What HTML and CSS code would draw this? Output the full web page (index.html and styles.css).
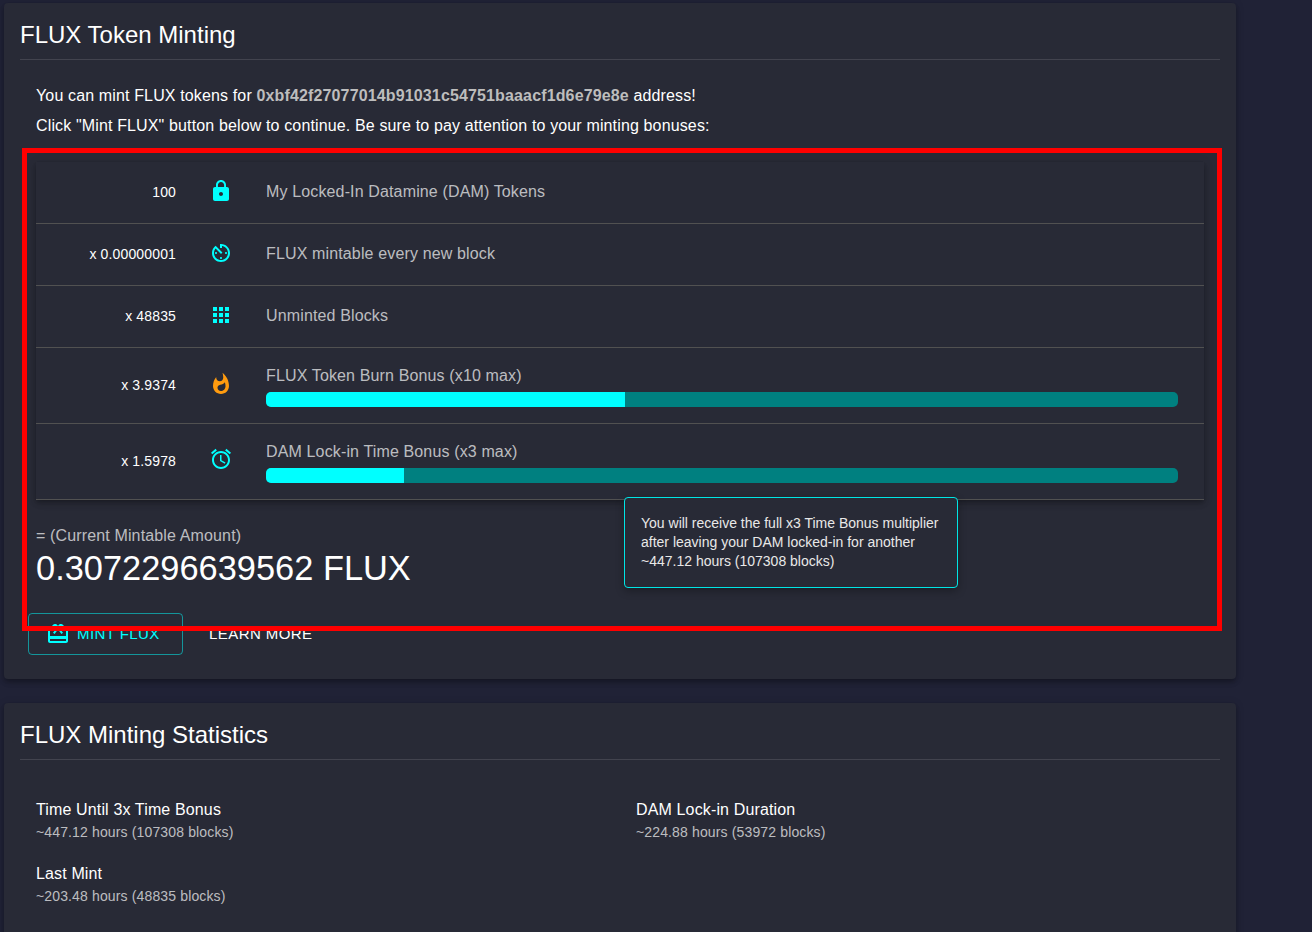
FILE: index.html
```html
<!DOCTYPE html>
<html lang="en">
<head>
    <meta charset="UTF-8">
    <title>FLUX Token Minting</title>
    <link rel="stylesheet" href="styles.css">
</head>
<body>
<div class="card mint-card">
    <h2 class="card-title">FLUX Token Minting</h2>
    <div class="card-body">
        <p class="intro">You can mint FLUX tokens for <strong>0xbf42f27077014b91031c54751baaacf1d6e79e8e</strong> address!</p>
        <p class="intro">Click "Mint FLUX" button below to continue. Be sure to pay attention to your minting bonuses:</p>

        <div class="bonus-table">
            <div class="bonus-row">
                <div class="bonus-value">100</div>
                <div class="bonus-icon">
                    <svg viewBox="0 0 24 24" class="icon cyan"><path d="M18 8h-1V6c0-2.76-2.24-5-5-5S7 3.24 7 6v2H6c-1.1 0-2 .9-2 2v10c0 1.1.9 2 2 2h12c1.1 0 2-.9 2-2V10c0-1.1-.9-2-2-2zm-6 9c-1.1 0-2-.9-2-2s.9-2 2-2 2 .9 2 2-.9 2-2 2zm3.1-9H8.9V6c0-1.71 1.39-3.1 3.1-3.1 1.71 0 3.1 1.39 3.1 3.1v2z"/></svg>
                </div>
                <div class="bonus-label">My Locked-In Datamine (DAM) Tokens</div>
            </div>
            <div class="bonus-row">
                <div class="bonus-value">x 0.00000001</div>
                <div class="bonus-icon">
                    <svg viewBox="0 0 24 24" class="icon cyan"><path d="M11 17c0 .55.45 1 1 1s1-.45 1-1-.45-1-1-1-1 .45-1 1zm0-14v4h2V5.08c3.39.49 6 3.39 6 6.92 0 3.87-3.13 7-7 7s-7-3.13-7-7c0-1.68.59-3.22 1.58-4.42L12 13l1.41-1.41-6.8-6.8v.02C4.42 6.45 3 9.05 3 12c0 4.97 4.02 9 9 9 4.97 0 9-4.03 9-9s-4.03-9-9-9h-1zm7 9c0-.55-.45-1-1-1s-1 .45-1 1 .45 1 1 1 1-.45 1-1zM6 12c0 .55.45 1 1 1s1-.45 1-1-.45-1-1-1-1 .45-1 1z"/></svg>
                </div>
                <div class="bonus-label">FLUX mintable every new block</div>
            </div>
            <div class="bonus-row">
                <div class="bonus-value">x 48835</div>
                <div class="bonus-icon">
                    <svg viewBox="0 0 24 24" class="icon cyan"><path d="M4 8h4V4H4v4zm6 12h4v-4h-4v4zm-6 0h4v-4H4v4zm0-6h4v-4H4v4zm6 0h4v-4h-4v4zm6-10v4h4V4h-4zm-6 4h4V4h-4v4zm6 6h4v-4h-4v4zm0 6h4v-4h-4v4z"/></svg>
                </div>
                <div class="bonus-label">Unminted Blocks</div>
            </div>
            <div class="bonus-row tall">
                <div class="bonus-value">x 3.9374</div>
                <div class="bonus-icon">
                    <svg viewBox="0 0 24 24" class="icon orange"><path d="M13.5.67s.74 2.65.74 4.8c0 2.06-1.35 3.73-3.41 3.73-2.07 0-3.63-1.67-3.63-3.73l.03-.36C5.21 7.51 4 10.62 4 14c0 4.42 3.58 8 8 8s8-3.58 8-8C20 8.61 17.41 3.8 13.5.67zM11.71 19c-1.78 0-3.22-1.4-3.22-3.14 0-1.62 1.05-2.76 2.81-3.12 1.77-.36 3.6-1.21 4.62-2.58.39 1.29.59 2.65.59 4.04 0 2.65-2.15 4.8-4.8 4.8z"/></svg>
                </div>
                <div class="bonus-label">
                    FLUX Token Burn Bonus (x10 max)
                    <div class="bar"><div class="bar-fill" style="width: 39.37%"></div></div>
                </div>
            </div>
            <div class="bonus-row tall">
                <div class="bonus-value">x 1.5978</div>
                <div class="bonus-icon">
                    <svg viewBox="0 0 24 24" class="icon cyan"><path d="M22 5.72l-4.6-3.86-1.29 1.53 4.6 3.86L22 5.72zM7.88 3.39L6.6 1.86 2 5.71l1.29 1.53 4.59-3.85zM12.5 8H11v6l4.75 2.85.75-1.23-4-2.37V8zM12 4c-4.97 0-9 4.03-9 9s4.02 9 9 9c4.97 0 9-4.03 9-9s-4.03-9-9-9zm0 16c-3.87 0-7-3.13-7-7s3.13-7 7-7 7 3.13 7 7-3.13 7-7 7z"/></svg>
                </div>
                <div class="bonus-label">
                    DAM Lock-in Time Bonus (x3 max)
                    <div class="bar"><div class="bar-fill" style="width: 15.13%"></div></div>
                </div>
            </div>
        </div>

        <div class="amount-label">= (Current Mintable Amount)</div>
        <div class="amount">0.3072296639562 FLUX</div>
    </div>

    <div class="actions">
        <a href="#" class="button outlined">
            <svg viewBox="0 0 24 24" class="icon cyan"><path d="M20 6h-2.18c.11-.31.18-.65.18-1 0-1.66-1.34-3-3-3-1.05 0-1.96.54-2.5 1.35l-.5.67-.5-.68C10.96 2.54 10.05 2 9 2 7.34 2 6 3.34 6 5c0 .35.07.69.18 1H4c-1.11 0-1.99.89-1.99 2L2 19c0 1.11.89 2 2 2h16c1.11 0 2-.89 2-2V8c0-1.11-.89-2-2-2zm-5-2c.55 0 1 .45 1 1s-.45 1-1 1-1-.45-1-1 .45-1 1-1zM9 4c.55 0 1 .45 1 1s-.45 1-1 1-1-.45-1-1 .45-1 1-1zm11 15H4v-2h16v2zm0-5H4V8h5.08L7 10.83 8.62 12 11 8.76l1-1.36 1 1.36L15.38 12 17 10.83 14.92 8H20v6z"/></svg>
            <span class="button-text">Mint FLUX</span>
        </a>
        <a href="#" class="button"><span class="button-text">Learn More</span></a>
    </div>

    <!-- Tooltip over the lock-in row -->
    <div class="tooltip">You will receive the full x3 Time Bonus multiplier after leaving your DAM locked-in for another ~447.12 hours (107308 blocks)</div>
    <!-- Red highlight box -->
    <div class="highlight"></div>
</div>

<div class="card">
    <h2 class="card-title">FLUX Minting Statistics</h2>
    <div class="card-body stats">
        <div class="stat">
            <div class="stat-name">Time Until 3x Time Bonus</div>
            <div class="stat-value">~447.12 hours (107308 blocks)</div>
        </div>
        <div class="stat">
            <div class="stat-name">DAM Lock-in Duration</div>
            <div class="stat-value">~224.88 hours (53972 blocks)</div>
        </div>
        <div class="stat">
            <div class="stat-name">Last Mint</div>
            <div class="stat-value">~203.48 hours (48835 blocks)</div>
        </div>
    </div>
</div>
</body>
</html>
```

FILE: styles.css
```css
/* General Styles */
html, body {
    height: 100%;
    overflow: hidden;
}

body {
    margin: 0;
    padding: 3px 76px 0 4px;
    background-color: #202236;
    font-family: "Liberation Sans", Arial, sans-serif;
    font-size: 16px;
    letter-spacing: 0.14px;
    color: #fff;
}

.card {
    position: relative;
    margin-bottom: 24px;
    padding: 16px;
    background-color: #282a36;
    border-radius: 4px;
    box-shadow: 0 2px 4px -1px rgba(0, 0, 0, 0.2), 0 4px 5px 0 rgba(0, 0, 0, 0.14), 0 1px 10px 0 rgba(0, 0, 0, 0.12);
}

.card-title {
    margin: 0;
    padding-bottom: 8px;
    height: 32px;
    font-size: 24px;
    font-weight: 400;
    line-height: 32px;
    letter-spacing: 0;
    border-bottom: 1px solid rgba(255, 255, 255, 0.12);
}

.card-body {
    padding: 16px 16px 0;
}

/* Intro */
.intro {
    margin: 9px 0 0;
    line-height: 22px;
    height: 22px;
}

.intro + .intro {
    margin-top: 8px;
}

.intro strong {
    color: #bdbdbd;
}

/* Bonus table */
.bonus-table {
    margin-top: 25px;
    box-shadow: 0 2px 4px -1px rgba(0, 0, 0, 0.2), 0 4px 5px 0 rgba(0, 0, 0, 0.14), 0 1px 10px 0 rgba(0, 0, 0, 0.12);
}

.bonus-row {
    display: flex;
    align-items: center;
    height: 61px;
    border-bottom: 1px solid #515151;
}

.bonus-row.tall {
    height: 75px;
}

.bonus-value {
    flex: 0 0 140px;
    padding: 0 16px 2px 0;
    text-align: right;
    font-size: 14px;
}

.bonus-icon {
    flex: 0 0 58px;
    display: flex;
    justify-content: center;
    padding-bottom: 4px;
}

.bonus-row:last-child .bonus-icon {
    padding-bottom: 6px;
}

.icon {
    width: 24px;
    height: 24px;
    fill: currentColor;
    flex: none;
}

.cyan {
    color: #00ffff;
}

.orange {
    color: #ff9b0f;
}

.bonus-label {
    flex: 1;
    padding: 0 26px 2px 16px;
    color: rgba(255, 255, 255, 0.7);
}

.tall .bonus-label {
    padding: 3px 26px 0 16px;
}

.bar {
    height: 15px;
    margin-top: 7px;
    background-color: #008080;
    border-radius: 5px;
    overflow: hidden;
}

.bar-fill {
    height: 100%;
    background-color: #00ffff;
}

/* Mintable amount */
.amount-label {
    margin-top: 26px;
    line-height: 20px;
    color: rgba(255, 255, 255, 0.7);
}

.amount {
    font-size: 34.4px;
    line-height: 44px;
    letter-spacing: 0;
}

/* Buttons */
.actions {
    display: flex;
    align-items: center;
    margin: 23px 0 8px 8px;
}

.button {
    display: inline-flex;
    align-items: center;
    gap: 7px;
    height: 42px;
    padding: 0 11px;
    margin-right: 15px;
    color: #fff;
    font-size: 15px;
    letter-spacing: 0.43px;
    text-transform: uppercase;
    text-decoration: none;
}

.button-text {
    padding-bottom: 2px;
}

.button.outlined {
    box-sizing: border-box;
    width: 155px;
    padding: 0 17px;
    color: #00ffff;
    border: 1px solid rgba(0, 255, 255, 0.5);
    border-radius: 4px;
}

/* Overlays */
.tooltip {
    position: absolute;
    left: 620px;
    top: 494px;
    box-sizing: border-box;
    width: 334px;
    height: 91px;
    padding: 16px;
    font-size: 14px;
    line-height: 19px;
    letter-spacing: 0;
    color: #e8e8e8;
    background-color: #282a36;
    border: 1px solid #00e5e5;
    border-radius: 4px;
    box-shadow: 0 3px 8px rgba(0, 0, 0, 0.3);
}

.highlight {
    position: absolute;
    left: 18px;
    top: 145px;
    box-sizing: border-box;
    width: 1200px;
    height: 483px;
    border: 5px solid #ff0000;
}

/* Statistics */
.stats {
    display: grid;
    grid-template-columns: 600px 1fr;
    row-gap: 22px;
    padding-top: 40px;
    padding-bottom: 30px;
}

.stat-name {
    line-height: 20px;
}

.stat-value {
    margin-top: 2px;
    font-size: 14px;
    line-height: 20px;
    color: rgba(255, 255, 255, 0.7);
}
```
